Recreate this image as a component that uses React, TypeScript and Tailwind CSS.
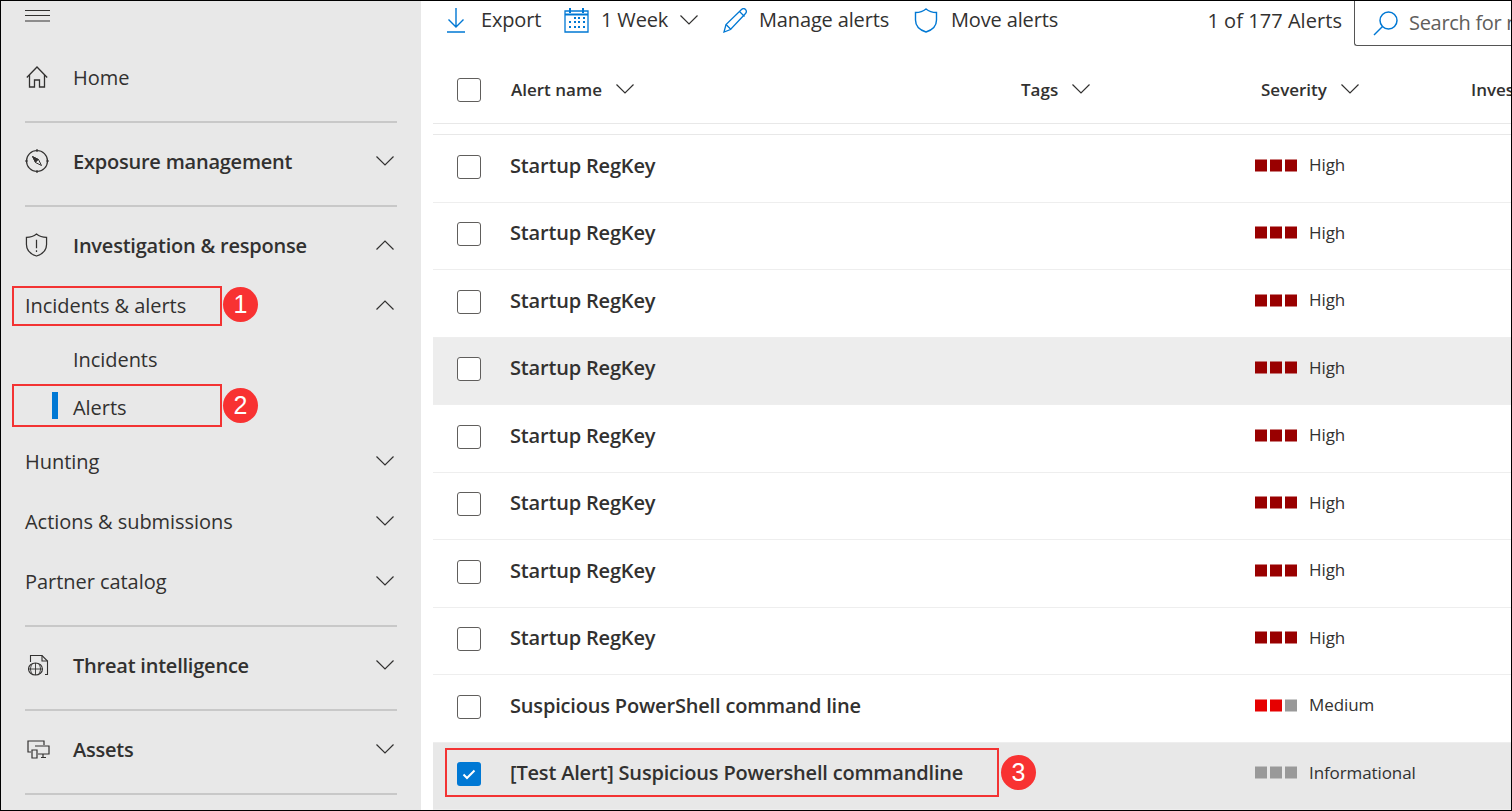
import React from 'react';

const FONT = "font-['Open_Sans','Noto_Sans',sans-serif]";

const Chevron = ({ up = false, className = '' }: { up?: boolean; className?: string }) => (
  <svg width="18" height="10" viewBox="0 0 18 10" fill="none" stroke="currentColor" strokeWidth="1.2" className={`shrink-0 ${className}`}>
    {up ? <path d="M0.5 9.5 9 1l8.5 8.5" /> : <path d="M0.5 0.5 9 9l8.5-8.5" />}
  </svg>
);

const HomeIcon = () => (
  <svg width="22" height="22" viewBox="0 0 22 22" fill="none" stroke="#323130" strokeWidth="1.3" className="ml-[1px]">
    <path d="M0.8 11.5 11 1l10.2 10.5" />
    <path d="M3.5 9v12h5v-7h5v7h5V9" />
  </svg>
);

const CompassIcon = () => (
  <svg width="24" height="24" viewBox="0 0 24 24" fill="none" stroke="#323130" strokeWidth="1.2" className="-mt-[1px]">
    <circle cx="12" cy="12" r="10.5" />
    <path d="M12 0v3M12 21v3M0 12h3M21 12h3" />
    <path d="M7.5 7.5 13.5 10.5 16.5 16.5 10.5 13.5z" strokeWidth="1" />
    <path d="M7.5 7.5 13.5 10.5 10.5 13.5z" fill="#323130" strokeWidth="0.6" />
  </svg>
);

const ShieldAlert = () => (
  <svg width="23" height="24" viewBox="0 0 24 25" fill="none" stroke="#323130" strokeWidth="1.3" className="-mt-[1px]">
    <path d="M12 1c3 2.500 6.500 3.500 10.500 3.500V12c0 6-4 10-10.500 12C5.500 22 1.500 18 1.500 12V4.500C5.500 4.500 9 3.500 12 1z" />
    <path d="M12 7v9M12 18v1.800" />
  </svg>
);

const ThreatIcon = () => (
  <svg width="21" height="22" viewBox="0 0 21 22" fill="none" stroke="#323130" strokeWidth="1.1" className="ml-[3px]">
    <path d="M2.500 8V1.500H14L19.500 7v13.500H17" />
    <path d="M14 1.500V7h5.500" />
    <ellipse cx="7.500" cy="15" rx="7" ry="6" />
    <path d="M7.500 9v12M1 15h13M4 10.500c-2 3-2 6 0 9M11 10.500c2 3 2 6 0 9" strokeWidth="0.9" />
  </svg>
);

const AssetsIcon = () => (
  <svg width="23" height="19" viewBox="0 0 23 19" fill="none" stroke="#323130" strokeWidth="1.2" className="ml-[2px]">
    <path d="M4 12H1V1h16v4" />
    <path d="M8 6h14v8H11" />
    <path d="M5 10h5v8H5z" />
    <path d="M16 14v3M14 17.500h5" />
  </svg>
);

const NavDivider = ({ className = '' }: { className?: string }) => (
  <div className={`mx-[24px] w-[372px] h-[2px] bg-[#c8c8c8] ${className}`} />
);

type NavRowProps = {
  label: string;
  icon?: React.ReactNode;
  chevron?: 'up' | 'down';
  bold?: boolean;
  className?: string;
};

const NavRow = ({ label, icon, chevron, bold, className = '' }: NavRowProps) => (
  <div className={`flex items-center h-[40px] pl-[24px] pr-[27px] text-[#323130] ${className}`}>
    {icon && <div className="w-[48px] flex items-center shrink-0">{icon}</div>}
    <span className={bold ? 'text-[20px] font-semibold tracking-[-0.22px] translate-y-[1px]' : 'text-[20px] tracking-[-0.05px] translate-y-[1px]'}>{label}</span>
    {chevron && <Chevron up={chevron === 'up'} className="ml-auto text-[#323130]" />}
  </div>
);

const Sidebar = () => (
  <aside className="w-[420px] shrink-0 h-full bg-[#e8e8e8] flex flex-col overflow-hidden">
    <div className="h-[41px] pl-[24px] pt-[9px]">
      <svg width="25" height="12" viewBox="0 0 25 12" stroke="#323130" strokeWidth="1">
        <path d="M0 0.500h25M0 5.500h25M0 11h25" />
      </svg>
    </div>
    <div className="h-[70px] flex items-center pl-[24px] text-[#323130]">
      <div className="w-[48px] shrink-0"><HomeIcon /></div>
      <span className="text-[20px] translate-y-[1px]">Home</span>
    </div>
    <NavDivider className="mt-[9px]" />
    <NavRow className="mt-[18px]" icon={<CompassIcon />} label="Exposure management" bold chevron="down" />
    <NavDivider className="mt-[24px]" />
    <NavRow className="mt-[18px]" icon={<ShieldAlert />} label="Investigation & response" bold chevron="up" />
    <NavRow className="mt-[20px]" label="Incidents & alerts" chevron="up" />
    <NavRow className="mt-[14px] pl-[72px]" label="Incidents" />
    <div className="relative mt-[8px]">
      <div className="absolute left-[51px] top-[5px] w-[6px] h-[27px] bg-[#0078d4]" />
      <NavRow className="pl-[72px]" label="Alerts" />
    </div>
    <NavRow className="mt-[14px]" label="Hunting" chevron="down" />
    <NavRow className="mt-[20px]" label="Actions & submissions" chevron="down" />
    <NavRow className="mt-[20px]" label="Partner catalog" chevron="down" />
    <NavDivider className="mt-[24px]" />
    <NavRow className="mt-[18px]" icon={<ThreatIcon />} label="Threat intelligence" bold chevron="down" />
    <NavDivider className="mt-[24px]" />
    <NavRow className="mt-[18px]" icon={<AssetsIcon />} label="Assets" bold chevron="down" />
    <NavDivider className="mt-[24px]" />
  </aside>
);

const ToolbarText = ({ children }: { children: React.ReactNode }) => (
  <span className="text-[20px] tracking-[-0.15px] text-[#323130] whitespace-nowrap">{children}</span>
);

const calendarDots = [
  [10, 9], [14, 9], [19, 9],
  [5, 13], [10, 13], [14, 13], [19, 13],
  [5, 18], [10, 18], [14, 18], [19, 18],
];

const Toolbar = () => (
  <div className="h-[45px] flex items-start shrink-0 pl-[26px]">
    <div className="w-[117px] h-[38px] flex items-center">
      <svg width="18" height="25" viewBox="0 0 18 25" fill="none" stroke="#0078d4" strokeWidth="1.4" className="mr-[16px] shrink-0">
        <path d="M9 0v19M1.500 11.500 9 19l7.500-7.500M0 24h18" />
      </svg>
      <ToolbarText>Export</ToolbarText>
    </div>
    <div className="w-[159px] h-[38px] flex items-center">
      <svg width="25" height="25" viewBox="0 0 25 25" fill="none" stroke="#0078d4" strokeWidth="1.3" className="mr-[12px] shrink-0">
        <path d="M1 3h23v21H1z" />
        <path d="M1 6.500h23" strokeWidth="2" />
        <path d="M6 0v5M19 0v5" strokeWidth="2" />
        {calendarDots.map(([x, y]) => (
          <rect key={`${x}-${y}`} x={x} y={y} width="2" height="2" fill="#0078d4" stroke="none" />
        ))}
      </svg>
      <ToolbarText>1 Week</ToolbarText>
      <Chevron className="ml-[12px] text-[#323130]" />
    </div>
    <div className="w-[191px] h-[38px] flex items-center">
      <svg width="25" height="25" viewBox="0 0 25 25" fill="none" stroke="#0078d4" strokeWidth="1.3" className="mr-[11px] shrink-0">
        <path d="M1 24 3 16.500 18.500 1.500c1.500-1.200 3-1 4 0s1.200 2.500 0 4L7.500 21.500z" />
        <path d="M3 16.500l5 5M16.500 3.500l5 5" />
      </svg>
      <ToolbarText>Manage alerts</ToolbarText>
    </div>
    <div className="h-[38px] flex items-center">
      <svg width="24" height="25" viewBox="0 0 24 25" fill="none" stroke="#0078d4" strokeWidth="1.400" className="mr-[13px] shrink-0">
        <path d="M12 1c3 2.500 6.500 3.500 10.500 3.500V12c0 6-4 10-10.500 12C5.500 22 1.500 18 1.500 12V4.500C5.500 4.500 9 3.500 12 1z" />
      </svg>
      <ToolbarText>Move alerts</ToolbarText>
    </div>
    <div className="ml-auto h-[40px] flex items-center mr-[12px]">
      <span className="text-[20px] tracking-[0.05px] text-[#323130] whitespace-nowrap">1 of 177 Alerts</span>
    </div>
    <div className="w-[157px] h-[45px] shrink-0 border-l border-b border-[#555555] rounded-bl-[3px] flex items-center pl-[18px] overflow-hidden">
      <svg width="25" height="25" viewBox="0 0 25 25" fill="none" stroke="#0078d4" strokeWidth="1.500" className="mr-[11px] shrink-0">
        <circle cx="15.500" cy="9.500" r="8.500" />
        <path d="M9.500 15.500 1 24" />
      </svg>
      <span className="text-[20px] tracking-[-0.3px] text-[#605e5c] whitespace-nowrap">Search for name</span>
    </div>
  </div>
);

const Checkbox = ({ checked = false }: { checked?: boolean }) =>
  checked ? (
    <div className="w-[24px] h-[24px] rounded-[3px] bg-[#0078d4] flex items-center justify-center shrink-0">
      <svg width="14" height="11" viewBox="0 0 14 11" fill="none" stroke="#ffffff" strokeWidth="2">
        <path d="M1.500 5.500 5 9l7.500-7.500" />
      </svg>
    </div>
  ) : (
    <div className="w-[24px] h-[24px] rounded-[3px] border border-[#605e5c] bg-white shrink-0" />
  );

const HeaderCell = ({ label, className, chevronGap }: { label: string; className: string; chevronGap?: string }) => (
  <div className={`flex items-center shrink-0 ${className}`}>
    <span className="text-[17px] font-semibold text-[#323130] whitespace-nowrap">{label}</span>
    {chevronGap && <Chevron className={`${chevronGap} text-[#323130] -translate-y-[1px]`} />}
  </div>
);

const TableHeader = () => (
  <div className="h-[78px] ml-[12px] pl-[24px] pt-[10px] border-b border-[#e8e8e8] flex items-center shrink-0 overflow-hidden">
    <Checkbox />
    <HeaderCell label="Alert name" className="ml-[30px] w-[510px]" chevronGap="ml-[14px]" />
    <HeaderCell label="Tags" className="w-[240px]" chevronGap="ml-[14px]" />
    <HeaderCell label="Severity" className="w-[210px]" chevronGap="ml-[14px]" />
    <HeaderCell label="Investigation state" className="w-[200px]" />
  </div>
);

const severityColors: Record<string, string[]> = {
  High: ['bg-[#990000]', 'bg-[#990000]', 'bg-[#990000]'],
  Medium: ['bg-[#e60000]', 'bg-[#e60000]', 'bg-[#999999]'],
  Informational: ['bg-[#999999]', 'bg-[#999999]', 'bg-[#999999]'],
};

type Alert = { name: string; severity: string; bg?: string; checked?: boolean };

const alerts: Alert[] = [
  { name: 'Startup RegKey', severity: 'High' },
  { name: 'Startup RegKey', severity: 'High' },
  { name: 'Startup RegKey', severity: 'High' },
  { name: 'Startup RegKey', severity: 'High', bg: 'bg-[#ededed]' },
  { name: 'Startup RegKey', severity: 'High' },
  { name: 'Startup RegKey', severity: 'High' },
  { name: 'Startup RegKey', severity: 'High' },
  { name: 'Startup RegKey', severity: 'High' },
  { name: 'Suspicious PowerShell command line', severity: 'Medium' },
  { name: '[Test Alert] Suspicious Powershell commandline', severity: 'Informational', bg: 'bg-[#e8e8e8]', checked: true },
];

const AlertRow = ({ alert }: { alert: Alert }) => (
  <div className={`h-[67.5px] pl-[24px] pb-[3px] border-b border-[#eeeeee] flex items-center ${alert.bg ?? ''}`}>
    <Checkbox checked={alert.checked} />
    <div className="ml-[29px] w-[745px] shrink-0 text-[20px] font-semibold tracking-[-0.18px] text-[#323130] -translate-y-[1px]">{alert.name}</div>
    <div className="flex items-center gap-[3px] -translate-y-[1.5px]">
      {severityColors[alert.severity].map((c, i) => (
        <div key={i} className={`w-[12px] h-[12px] ${c}`} />
      ))}
    </div>
    <span className="ml-[12px] text-[17px] tracking-[-0.1px] text-[#323130] -translate-y-[2.5px]">{alert.severity}</span>
  </div>
);

const Badge = ({ n, className }: { n: number; className: string }) => (
  <div className={`absolute w-[35px] h-[35px] rounded-full bg-[#f83232] text-white flex items-center justify-center font-['Liberation_Sans',sans-serif] text-[25px] ${className}`}>
    {n}
  </div>
);

export default function App() {
  return (
    <div className={`relative w-[1512px] h-[811px] bg-white border border-black flex overflow-hidden ${FONT}`}>
      <Sidebar />
      <main className="flex-1 min-w-0 h-full flex flex-col">
        <Toolbar />
        <TableHeader />
        <div className="ml-[12px] mt-[10px] border-t border-[#e8e8e8]">
          {alerts.map((a, i) => (
            <AlertRow key={i} alert={a} />
          ))}
        </div>
      </main>

      <div className="absolute left-[11px] top-[285px] w-[210px] h-[40px] border-2 border-[#f33333]" />
      <Badge n={1} className="left-[222px] top-[286px]" />
      <div className="absolute left-[11px] top-[383px] w-[210px] h-[43px] border-2 border-[#f33333]" />
      <Badge n={2} className="left-[222px] top-[387px]" />
      <div className="absolute left-[444px] top-[747px] w-[554px] h-[49px] border-2 border-[#f33333]" />
      <Badge n={3} className="left-[1000px] top-[754px]" />
    </div>
  );
}
